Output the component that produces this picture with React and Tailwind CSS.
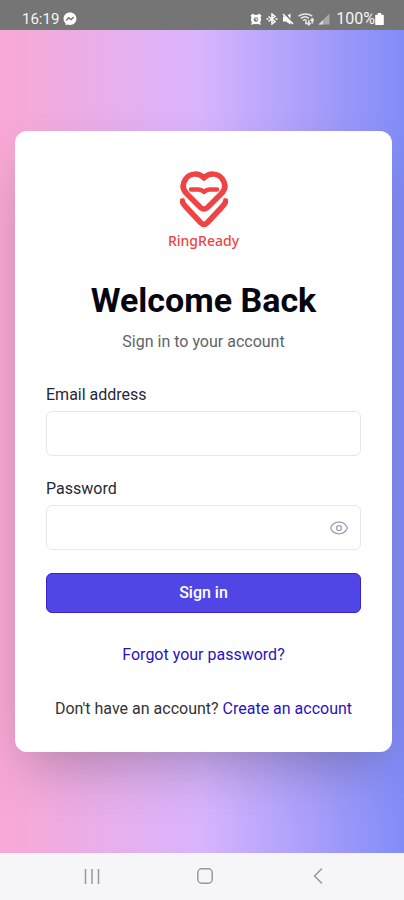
import { useState } from "react";
import { ChevronLeft, Eye, EyeOff } from "lucide-react";

function StatusBar() {
  return (
    <header className="flex h-[30px] items-center justify-between bg-[#757575] pt-2 pr-5 pl-[22px] leading-5 text-[#f4f4f4]">
      <div className="flex items-center gap-1">
        <span className="text-[15px]">16:19</span>
        <svg viewBox="0 0 24 24" className="h-3.5 w-3.5" aria-hidden="true">
          <path
            fill="#fff"
            d="M12 1C5.700 1 1 5.600 1 11.700c0 3.200 1.300 6 3.500 7.900v3.200l3.300-1.300c1.300.4 2.700.6 4.200.6 6.300 0 11-4.600 11-10.600S18.300 1 12 1z"
          />
          <path
            fill="none"
            stroke="#757575"
            strokeWidth="2.500"
            d="M5.500 14.500l4.300-4.500 4.200 3 4.500-4.300"
          />
        </svg>
      </div>
      <div className="flex items-center gap-1">
        <svg viewBox="0 0 24 24" className="h-3 w-3" aria-hidden="true">
          <path fill="#fff" d="M1 5l5-4 3 3a10 10 0 0 1 6 0l3-3 5 4-2 4a10 10 0 0 1-1 10l2 4h-4l-2-1.500a10 10 0 0 1-8 0L6 23H2l2-4A10 10 0 0 1 3 9z" />
          <circle cx="12" cy="13" r="4.500" fill="#757575" />
          <path fill="none" stroke="#fff" strokeWidth="2" d="M12 9v4.500h3.500" />
        </svg>
        <svg viewBox="0 0 24 24" className="h-3 w-3" fill="none" stroke="#fff" strokeWidth="3" aria-hidden="true">
          <path d="M5 7l13 10-6 5V2l6 5L5 17" />
          <path d="M1 12h4M19 12h4" />
        </svg>
        <svg viewBox="0 0 24 24" className="h-3 w-3" aria-hidden="true">
          <path fill="#fff" d="M2 7h6l9-6v22l-9-6H2z" />
          <path stroke="#757575" strokeWidth="4" d="M4 0l20 21" />
          <path stroke="#fff" strokeWidth="3" d="M2 2l20 20" />
        </svg>
        <svg viewBox="0 0 28 24" className="h-3.5 w-4" fill="none" stroke="#e8e8e8" aria-hidden="true">
          <path strokeWidth="2.500" d="M1 7c7-5 17-5 24 0M5 11c5-4 10-4 14 0M9 15c2-2 4-2 6 0" />
          <path strokeWidth="3" d="M14 21v-5M19 14v8M16 19l3 3 3-3M25 20v-6M22 15l3-3 3 3" />
        </svg>
        <svg viewBox="0 0 24 24" className="h-3 w-3" aria-hidden="true">
          <path fill="#a8a8a8" d="M1 23L23 1v22z" />
          <path fill="#d8d8d8" d="M1 23L10 14v9z" />
        </svg>
        <div className="flex items-center pl-0.5">
          <span className="text-[16px]">100%</span>
          <svg viewBox="0 0 10 14" className="h-3 w-[9px]" aria-hidden="true">
            <path fill="#fff" d="M3 0h4v2h2a1 1 0 0 1 1 1v10a1 1 0 0 1-1 1H1a1 1 0 0 1-1-1V3a1 1 0 0 1 1-1h2z" />
          </svg>
        </div>
      </div>
    </header>
  );
}

function Logo() {
  return (
    <div className="flex flex-col items-center gap-[3px] text-[#f04444]">
      <svg
        viewBox="0 0 48 57"
        className="h-[57px] w-12"
        fill="none"
        stroke="currentColor"
        strokeWidth="5.500"
        strokeLinecap="round"
        strokeLinejoin="round"
        aria-hidden="true"
      >
        <path d="M24 7C19 1.500 10 2 6 7.500C1.800 13 2.500 18.500 7 23L20.500 36.500Q24 39.500 27.500 36.500L41 23C45.500 18.500 46.200 13 42 7.500C38 2 29 1.500 24 7Z" />
        <path strokeWidth="4.500" d="M11 18.500H18.500Q21.500 18.500 24 21Q26.500 18.500 29.500 18.500H37" />
        <path strokeLinecap="butt" d="M1.500 27.500C2 31 3.500 33.500 6 36L20.500 51.500Q24 55 27.500 51.500L42 36C44.500 33.500 46 31 46.500 27.500" />
      </svg>
      <span className="font-['Noto_Sans'] text-sm leading-5 font-medium">RingReady</span>
    </div>
  );
}

function NavigationBar() {
  return (
    <nav className="flex h-[47px] items-center justify-between bg-[#f6f6f8] pr-[74px] pb-0.5 pl-20 text-[#999]">
      <button type="button" aria-label="Recent apps" className="flex h-6 w-6 items-center justify-center">
        <svg viewBox="0 0 16 16" className="h-4 w-4" stroke="currentColor" strokeWidth="1.500">
          <path d="M1.500 1v15M8 1v15M14.500 1v15" />
        </svg>
      </button>
      <button type="button" aria-label="Home" className="flex h-6 w-6 items-center justify-center">
        <svg viewBox="0 0 16 16" className="h-4 w-4" fill="none" stroke="currentColor" strokeWidth="1.500">
          <rect x="0.800" y="0.800" width="14.400" height="14.400" rx="4" />
        </svg>
      </button>
      <button type="button" aria-label="Back" className="flex h-6 w-6 items-center justify-center">
        <ChevronLeft className="h-7 w-7 shrink-0" strokeWidth={1.3} />
      </button>
    </nav>
  );
}

export default function App() {
  const [email, setEmail] = useState("");
  const [password, setPassword] = useState("");
  const [showPassword, setShowPassword] = useState(false);

  const handleSubmit = (e) => {
    e.preventDefault();
  };

  return (
    <div className="flex min-h-screen flex-col font-[Roboto,sans-serif]">
      <StatusBar />

      <main className="flex flex-1 items-center justify-center bg-linear-to-r/srgb from-[#f9a8d4] via-[#d8b4fe] to-[#818cf8] pr-3 pl-[15px]">
        <div className="w-full max-w-md rounded-xl bg-white px-[31px] pt-10 pb-[33px] shadow-2xl">
          <Logo />
          <h1 className="mt-[29px] text-center text-[34px] leading-10 font-bold text-[#05060f]">Welcome Back</h1>
          <p className="mt-2.5 text-center text-base leading-6 text-[#5f6368]">Sign in to your account</p>

          <form onSubmit={handleSubmit} className="mt-[31px] flex flex-col gap-[23px]">
            <div>
              <label htmlFor="email" className="block text-base leading-5 text-[#1f2937]">
                Email address
              </label>
              <input
                id="email"
                type="email"
                value={email}
                onChange={(e) => setEmail(e.target.value)}
                className="mt-1.5 block h-[45px] w-full rounded-md border border-gray-200 px-3 text-base"
              />
            </div>
            <div>
              <label htmlFor="password" className="block text-base leading-5 text-[#1f2937]">
                Password
              </label>
              <div className="relative mt-1.5">
                <input
                  id="password"
                  type={showPassword ? "text" : "password"}
                  value={password}
                  onChange={(e) => setPassword(e.target.value)}
                  className="block h-[45px] w-full rounded-md border border-gray-200 pr-10 pl-3 text-base"
                />
                <button
                  type="button"
                  aria-label={showPassword ? "Hide password" : "Show password"}
                  onClick={() => setShowPassword(!showPassword)}
                  className="absolute inset-y-0 right-0 flex items-center pr-3 text-gray-400"
                >
                  {showPassword ? (
                    <EyeOff className="h-5 w-5" strokeWidth={1.5} />
                  ) : (
                    <Eye className="h-5 w-5" strokeWidth={1.5} />
                  )}
                </button>
              </div>
            </div>
            <button
              type="submit"
              className="h-10 w-full rounded-md border border-[#3a22cc] bg-[#4f46e5] text-base leading-5 font-medium text-white"
            >
              Sign in
            </button>
          </form>

          <div className="mt-8 text-center text-base leading-5">
            <a href="#forgot" className="text-[#2a12c4]">
              Forgot your password?
            </a>
          </div>
          <p className="mt-[34px] text-center text-base leading-5 text-[#333]">
            Don't have an account?{" "}
            <a href="#signup" className="text-[#2a12c4]">
              Create an account
            </a>
          </p>
        </div>
      </main>

      <NavigationBar />
    </div>
  );
}
